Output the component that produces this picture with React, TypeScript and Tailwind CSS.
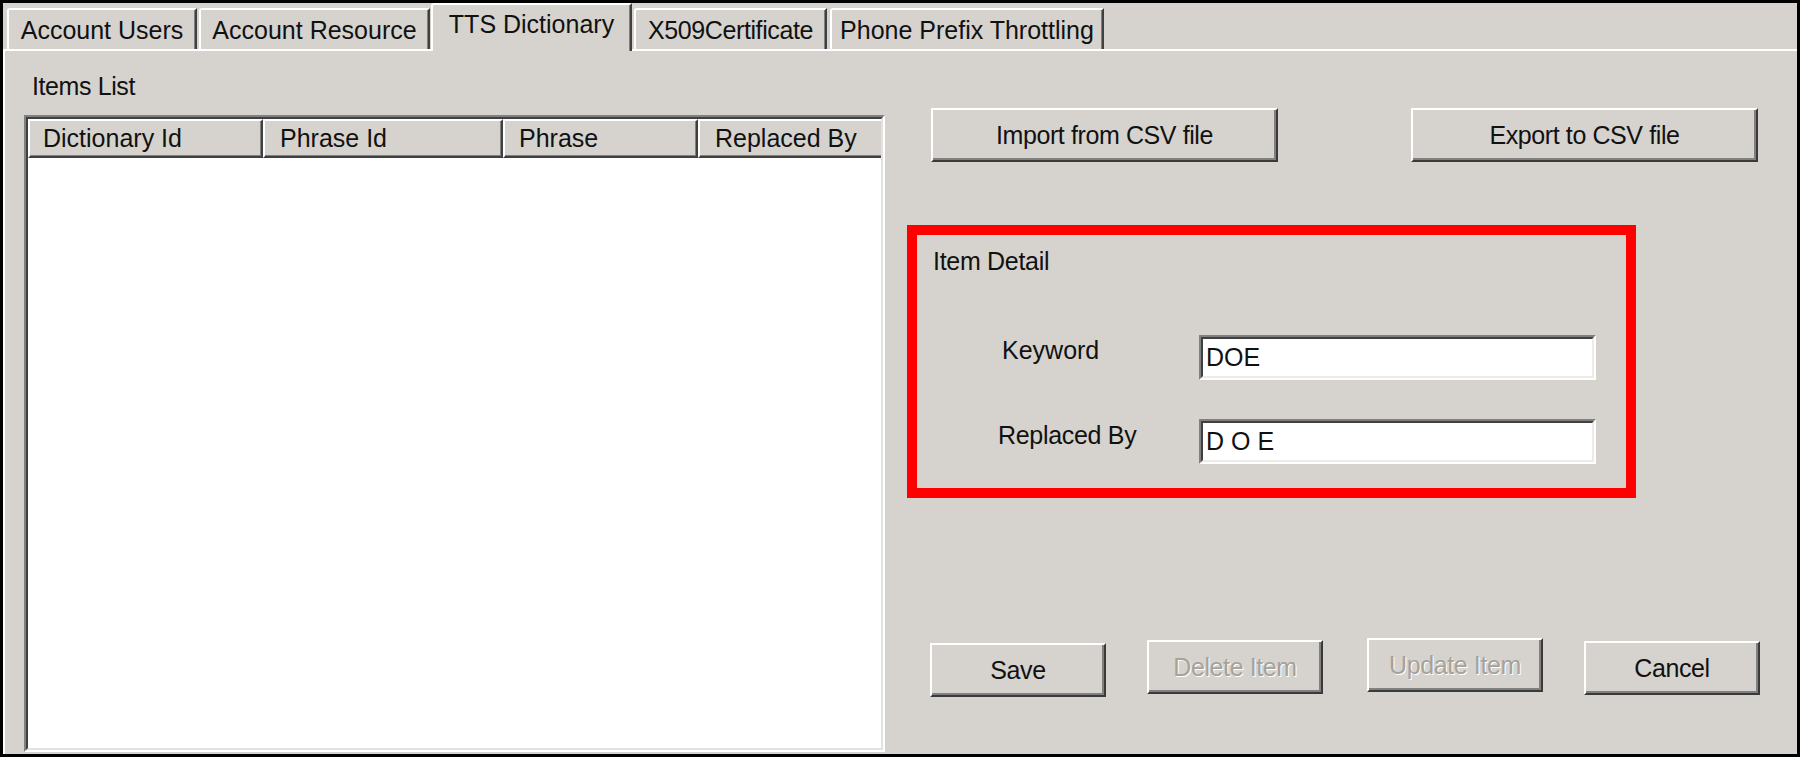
import React from "react";

const font = "font-['Liberation_Sans',Arial,sans-serif]";

function RaisedButton({
  label,
  disabled,
  className,
}: {
  label: string;
  disabled?: boolean;
  className: string;
}) {
  return (
    <div
      className={`flex items-center justify-center border-2 border-t-white border-l-white border-r-[#3a3a3a] border-b-[#3a3a3a] bg-[#d6d3ce] shadow-[inset_-2px_-2px_0_#808080] text-[25px] leading-none tracking-[-0.4px] ${
        disabled
          ? "text-[#a5a29c] [text-shadow:1px_1px_0_#ffffff]"
          : "text-[#111]"
      } ${className}`}
    >
      {label}
    </div>
  );
}

function TextInput({ value }: { value: string }) {
  return (
    <div className="h-[45px] w-[397px] border-2 border-t-[#808080] border-l-[#808080] border-r-white border-b-white bg-white">
      <div className="flex h-full items-center border-2 border-t-[#404040] border-l-[#404040] border-r-[#ecebe8] border-b-[#ecebe8] pl-[3px] text-[25px] leading-none text-[#111]">
        {value}
      </div>
    </div>
  );
}

export default function App() {
  return (
    <div
      className={`${font} flex h-[757px] w-[1800px] flex-col border-[3px] border-black bg-[#d6d3ce] text-[#111]`}
    >
      {/* tab strip */}
      <div className="flex h-[46px] shrink-0 items-end pl-[4px]">
        <div className="flex h-[41px] w-[190px] justify-center rounded-tl-[3px] border-t-2 border-l-2 border-r-2 border-t-white border-l-white border-r-[#404040] pt-[8px] text-[25px] leading-none shadow-[inset_-1px_0_0_#808080]">
          Account Users
        </div>
        <div className="ml-[2px] flex h-[41px] w-[231px] justify-center rounded-tl-[3px] border-t-2 border-l-2 border-r-2 border-t-white border-l-white border-r-[#404040] pt-[8px] text-[25px] leading-none shadow-[inset_-1px_0_0_#808080]">
          Account Resource
        </div>
        <div className="relative z-10 mb-[-2px] ml-[1px] flex h-[48px] w-[201px] justify-center rounded-tl-[3px] border-t-2 border-l-2 border-r-2 border-t-white border-l-white border-r-[#404040] bg-[#d6d3ce] pt-[7px] text-[25px] leading-none shadow-[inset_-1px_0_0_#808080]">
          TTS Dictionary
        </div>
        <div className="ml-[2px] flex h-[41px] w-[193px] justify-center rounded-tl-[3px] border-t-2 border-l-2 border-r-2 border-t-white border-l-white border-r-[#404040] pt-[8px] text-[25px] leading-none tracking-[-0.4px] shadow-[inset_-1px_0_0_#808080]">
          X509Certificate
        </div>
        <div className="ml-[3px] flex h-[41px] w-[274px] justify-center rounded-tl-[3px] border-t-2 border-l-2 border-r-2 border-t-white border-l-white border-r-[#404040] pt-[8px] text-[25px] leading-none shadow-[inset_-1px_0_0_#808080]">
          Phone Prefix Throttling
        </div>
      </div>

      {/* tab page */}
      <div className="flex min-h-0 flex-1 border-t-2 border-l-2 border-white">
        {/* items list column */}
        <div className="ml-[19px] flex w-[861px] flex-col">
          <div className="mt-[23px] pl-[8px] text-[25px] leading-none tracking-[-0.4px]">
            Items List
          </div>
          <div className="mb-[2px] mt-[16px] flex flex-1 flex-col border-2 border-t-[#808080] border-l-[#808080] border-r-white border-b-white">
            <div className="flex flex-1 flex-col overflow-hidden border-2 border-t-[#404040] border-l-[#404040] border-r-[#e4e2de] border-b-[#e4e2de] bg-white">
              <div className="flex h-[39px] shrink-0 bg-[#d6d3ce]">
                <div className="flex w-[235px] items-center border-2 border-t-white border-l-white border-r-[#404040] border-b-[#404040] pl-[13px] text-[25px] leading-none shadow-[inset_-1px_-1px_0_#808080]">
                  Dictionary Id
                </div>
                <div className="flex w-[240px] items-center border-2 border-t-white border-l-white border-r-[#404040] border-b-[#404040] pl-[15px] text-[25px] leading-none shadow-[inset_-1px_-1px_0_#808080]">
                  Phrase Id
                </div>
                <div className="flex w-[195px] items-center border-2 border-t-white border-l-white border-r-[#404040] border-b-[#404040] pl-[14px] text-[25px] leading-none shadow-[inset_-1px_-1px_0_#808080]">
                  Phrase
                </div>
                <div className="flex flex-1 items-center whitespace-nowrap border-t-2 border-l-2 border-b-2 border-t-white border-l-white border-b-[#404040] pl-[15px] text-[25px] leading-none shadow-[inset_0_-1px_0_#808080]">
                  Replaced By
                </div>
              </div>
              <div className="flex-1 bg-white" />
            </div>
          </div>
        </div>

        {/* item editing column */}
        <div className="flex flex-1 flex-col">
          <div className="mt-[57px] flex">
            <RaisedButton
              label="Import from CSV file"
              className="ml-[46px] h-[54px] w-[347px]"
            />
            <RaisedButton
              label="Export to CSV file"
              className="ml-[133px] h-[54px] w-[347px]"
            />
          </div>

          <div className="ml-[22px] mt-[63px] flex h-[273px] w-[729px] flex-col border-[10px] border-[#ff0000]">
            <div className="ml-[16px] mt-[14px] text-[25px] leading-none tracking-[-0.3px]">
              Item Detail
            </div>
            <div className="mt-[61px] flex items-start">
              <div className="mt-[3px] w-[282px] pl-[85px] text-[25px] leading-none">
                Keyword
              </div>
              <TextInput value="DOE" />
            </div>
            <div className="mt-[39px] flex items-start">
              <div className="mt-[4px] w-[282px] pl-[81px] text-[25px] leading-none tracking-[-0.3px]">
                Replaced By
              </div>
              <TextInput value="D O E" />
            </div>
          </div>

          <div className="mt-[140px] flex items-start">
            <RaisedButton
              label="Save"
              className="ml-[45px] mt-[5px] h-[54px] w-[176px]"
            />
            <RaisedButton
              label="Delete Item"
              disabled
              className="ml-[41px] mt-[2px] h-[54px] w-[176px]"
            />
            <RaisedButton
              label="Update Item"
              disabled
              className="ml-[44px] h-[54px] w-[176px]"
            />
            <RaisedButton
              label="Cancel"
              className="ml-[41px] mt-[3px] h-[54px] w-[176px]"
            />
          </div>
        </div>
      </div>
    </div>
  );
}
